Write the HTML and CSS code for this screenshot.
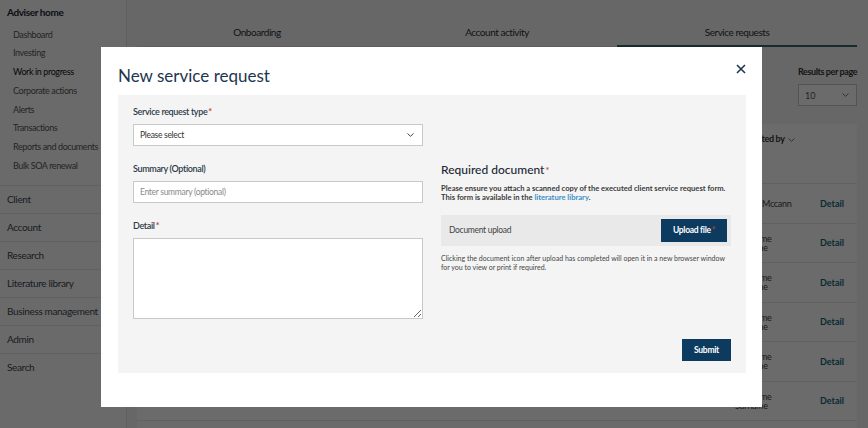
FILE: index.html
```html
<!DOCTYPE html>
<html lang="en">
<head>
<meta charset="utf-8">
<title>New service request</title>
<link rel="stylesheet" href="styles.css">
</head>
<body>
<div class="page">
  <aside class="sidebar">
    <div class="side-group">
      <div class="side-head">Adviser home</div>
      <ul class="side-sub">
        <li>Dashboard</li>
        <li>Investing</li>
        <li class="active">Work in progress</li>
        <li>Corporate actions</li>
        <li>Alerts</li>
        <li>Transactions</li>
        <li>Reports and documents</li>
        <li>Bulk SOA renewal</li>
      </ul>
    </div>
    <div class="side-item">Client</div>
    <div class="side-item">Account</div>
    <div class="side-item">Research</div>
    <div class="side-item">Literature library</div>
    <div class="side-item">Business management</div>
    <div class="side-item">Admin</div>
    <div class="side-item last">Search</div>
  </aside>

  <main class="main">
    <nav class="tabs">
      <div class="tab">Onboarding</div>
      <div class="tab">Account activity</div>
      <div class="tab active">Service requests</div>
    </nav>
    <div class="toolbar">
      <div class="per-page">
        <div class="per-page-label">Results per page</div>
        <div class="per-page-select"><span>10</span>
          <svg class="chev" width="7" height="4" viewBox="0 0 7 4"><path d="M0.5 0.5 L3.5 3.3 L6.5 0.5" fill="none" stroke="#777" stroke-width="1"/></svg>
        </div>
      </div>
    </div>
    <section class="card">
      <div class="card-head">
        <div class="spacer"></div>
        <div class="col-name head-cell">Submitted by
          <svg width="7" height="4" viewBox="0 0 7 4"><path d="M0.5 0.5 L3.5 3.3 L6.5 0.5" fill="none" stroke="#777" stroke-width="1"/></svg>
        </div>
        <div class="col-detail"></div>
      </div>
      <div class="row"><div class="spacer"></div><div class="col-name">Jessica Mccann</div><div class="col-detail">Detail</div></div>
      <div class="row"><div class="spacer"></div><div class="col-name">Firstname Surname</div><div class="col-detail">Detail</div></div>
      <div class="row"><div class="spacer"></div><div class="col-name">Firstname Surname</div><div class="col-detail">Detail</div></div>
      <div class="row"><div class="spacer"></div><div class="col-name">Firstname Surname</div><div class="col-detail">Detail</div></div>
      <div class="row"><div class="spacer"></div><div class="col-name">Firstname Surname</div><div class="col-detail">Detail</div></div>
      <div class="row"><div class="spacer"></div><div class="col-name">Firstname Surname</div><div class="col-detail">Detail</div></div>
    </section>
  </main>
</div>

<div class="overlay">
  <div class="modal">
    <header class="modal-head">
      <h1 class="modal-title">New service request</h1>
      <svg class="close" width="10" height="10" viewBox="0 0 10 10"><path d="M1 1 L9 9 M9 1 L1 9" stroke="#1d3650" stroke-width="1.6" fill="none"/></svg>
    </header>
    <div class="panel">
      <div class="form-grid">
        <div class="col-left">
          <div class="field">
            <label class="label">Service request type<span class="req">*</span></label>
            <div class="select"><span>Please select</span>
              <svg width="7" height="4" viewBox="0 0 7 4"><path d="M0.5 0.5 L3.5 3.3 L6.5 0.5" fill="none" stroke="#444" stroke-width="1"/></svg>
            </div>
          </div>
          <div class="field">
            <label class="label">Summary (Optional)</label>
            <input class="input" type="text" placeholder="Enter summary (optional)">
          </div>
          <div class="field">
            <label class="label">Detail<span class="req">*</span></label>
            <textarea class="textarea"></textarea>
          </div>
        </div>
        <div class="col-right">
          <h2 class="doc-title">Required document<span class="req">*</span></h2>
          <p class="doc-text"><span class="doc-line">Please ensure you attach a scanned copy of the executed client service request form.</span><span class="doc-line">This form is available in the <a class="link">literature library</a>.</span></p>
          <div class="upload">
            <span class="upload-label">Document upload</span>
            <div class="btn upload-btn">Upload file<span class="req">*</span></div>
          </div>
          <p class="note">Clicking the document icon after upload has completed will open it in a new browser window for you to view or print if required.</p>
        </div>
      </div>
      <div class="panel-foot">
        <div class="btn submit">Submit</div>
      </div>
    </div>
  </div>
</div>
</body>
</html>
```
FILE: styles.css
```css
* { box-sizing: border-box; margin: 0; padding: 0; }
body {
  font-family: Lato, "Noto Sans", sans-serif;
  width: 868px;
  height: 428px;
  overflow: hidden;
  position: relative;
  background: #f6f6f6;
  color: #333;
}
.page { display: flex; height: 428px; }

/* sidebar */
.sidebar {
  width: 127px;
  flex: none;
  background: #fdfdfd;
  border-right: 1px solid #e2e2e2;
}
.side-group { padding: 5px 0 9px; border-bottom: 1px solid #e8e8e8; }
.side-head {
  padding-left: 7px;
  font-size: 10px;
  line-height: 14px;
  font-weight: 700;
  letter-spacing: -0.4px;
  color: #1d2630;
}
.side-sub { list-style: none; margin-top: 6.6px; }
.side-sub li {
  padding-left: 13px;
  font-size: 9px;
  line-height: 18.75px;
  letter-spacing: -0.4px;
  color: #585858;
}
.side-sub li.active { color: #101010; }
.side-item {
  height: 28px;
  line-height: 27px;
  padding-left: 7px;
  font-size: 10px;
  letter-spacing: -0.35px;
  color: #3c4650;
  border-bottom: 1px solid #e8e8e8;
}
.side-item.last { border-bottom: none; }

/* main */
.main { flex: 1; padding: 0 11px 0 10px; display: flex; flex-direction: column; }
.tabs { display: flex; height: 47px; border-bottom: 1px solid #e0e0e0; }
.tab {
  flex: 1;
  display: flex;
  align-items: flex-end;
  justify-content: center;
  padding-bottom: 7px;
  font-size: 10px;
  line-height: 12px;
  letter-spacing: -0.45px;
  color: #2a3038;
  border-bottom: 2px solid transparent;
  margin-bottom: -1px;
}
.tab.active { border-bottom-color: #3d6470; }
.toolbar { display: flex; justify-content: flex-end; margin-top: 19px; }
.per-page { width: 59px; }
.per-page-label { font-size: 9px; line-height: 12px; font-weight: 700; letter-spacing: -0.4px; color: #333; white-space: nowrap; }
.per-page-select {
  margin-top: 6px;
  height: 22px;
  border: 1px solid #c9c9c9;
  background: #fff;
  display: flex;
  align-items: center;
  justify-content: space-between;
  padding: 0 7px 0 6px;
  font-size: 9px;
  color: #555;
}
.card { margin-top: 18px; background: #fff; flex: 1; }
.card-head, .row { display: flex; }
.card-head { height: 60px; padding-top: 9px; border-bottom: 1px solid #e6e6e6; }
.row { height: 39.5px; flex: none; align-items: center; border-bottom: 1px solid #e6e6e6; }
.spacer { flex: 1; }
.col-name { width: 65px; font-size: 9px; line-height: 9px; color: #444; letter-spacing: -0.3px; }
.head-cell { font-weight: 700; line-height: 12px; white-space: nowrap; color: #333; }
.head-cell svg { margin-left: 2px; vertical-align: middle; }
.col-detail { width: 57px; padding-left: 20px; font-size: 9px; font-weight: 700; color: #13667a; }

/* modal */
.overlay { position: absolute; inset: 0; background: rgba(0, 0, 0, 0.58); }
.modal {
  position: absolute;
  left: 101px;
  top: 47px;
  width: 661px;
  height: 360px;
  background: #fff;
  padding: 19px 16px 0 17px;
}
.modal-head { display: flex; justify-content: space-between; align-items: flex-start; height: 20px; margin-bottom: 9px; }
.modal-title { font-size: 17px; line-height: 20px; font-weight: 400; color: #1d3650; letter-spacing: 0; }
.close { margin-top: -2px; }
.panel { background: #f4f4f4; height: 278px; padding: 11px 15px 12px; }
.form-grid { display: grid; grid-template-columns: 290px 290px; column-gap: 18px; }
.field { margin-bottom: 17px; }
.field:last-child { margin-bottom: 0; }
.label {
  display: block;
  font-size: 9px;
  line-height: 12px;
  font-weight: 600;
  letter-spacing: -0.35px;
  color: #2c3b48;
  margin-bottom: 6px;
}
.req { color: #c0392b; margin-left: 1px; }
.select, .input {
  display: flex;
  align-items: center;
  width: 100%;
  height: 22px;
  border: 1px solid #c9c9c9;
  background: #fff;
  font-family: inherit;
  font-size: 8.5px;
  letter-spacing: -0.3px;
  color: #333;
  padding: 0 6px;
}
.select { justify-content: space-between; padding-right: 8px; }
.input::placeholder { color: #8a8a8a; }
.input { outline: none; }
.textarea {
  display: block;
  width: 100%;
  height: 81px;
  border: 1px solid #c9c9c9;
  background: #fff;
  font-family: inherit;
  outline: none;
}
.col-right { margin-top: 57px; }
.doc-title { font-size: 12px; line-height: 14px; font-weight: 500; color: #1c2833; }
.doc-title .req { font-size: 9px; }
.doc-text { margin-top: 5.5px; font-size: 7.6px; line-height: 9.5px; font-weight: 700; color: #3a3a3a; letter-spacing: 0; }
.doc-line { display: block; white-space: nowrap; }
.link { color: #3b8fc6; }
.upload {
  margin-top: 12px;
  height: 31px;
  background: #e9e9e9;
  display: flex;
  align-items: center;
  justify-content: space-between;
  padding: 0 4px 0 8px;
}
.upload-label { font-size: 8.5px; letter-spacing: -0.3px; color: #444; }
.btn {
  background: #0c3b5f;
  color: #fff;
  font-size: 8.5px;
  font-weight: 700;
  letter-spacing: -0.3px;
  display: flex;
  align-items: center;
  justify-content: center;
}
.upload-btn { width: 66px; height: 23px; }
.note { margin-top: 8px; font-size: 7px; line-height: 9.5px; color: #454545; letter-spacing: 0; }
.panel-foot { display: flex; justify-content: flex-end; margin-top: 20px; }
.submit { width: 49px; height: 22px; }
```
